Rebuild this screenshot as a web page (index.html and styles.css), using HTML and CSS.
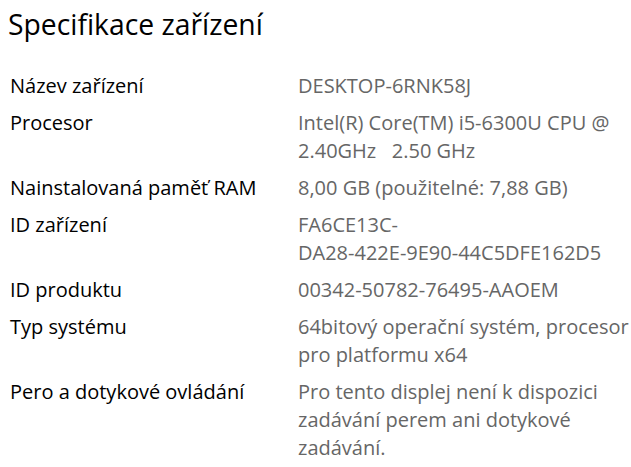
FILE: index.html
```html
<!DOCTYPE html>
<html lang="cs">
<head>
<meta charset="utf-8">
<link rel="stylesheet" href="styles.css">
</head>
<body>
<main class="page">
  <h1 class="title">Specifikace zařízení</h1>
  <dl class="specs">
    <dt>Název zařízení</dt><dd>DESKTOP-6RNK58J</dd>
    <dt>Procesor</dt><dd>Intel(R) Core(TM) i5-6300U CPU @ 2.40GHz&nbsp;&nbsp;&nbsp;2.50 GHz</dd>
    <dt>Nainstalovaná paměť RAM</dt><dd>8,00 GB (použitelné: 7,88 GB)</dd>
    <dt>ID zařízení</dt><dd>FA6CE13C-<span class="nowrap">DA28-422E-9E90-44C5DFE162D5</span></dd>
    <dt>ID produktu</dt><dd>00342-50782-76495-AAOEM</dd>
    <dt>Typ systému</dt><dd>64bitový operační systém, procesor pro platformu x64</dd>
    <dt>Pero a dotykové ovládání</dt><dd>Pro tento displej není k dispozici zadávání perem ani dotykové zadávání.</dd>
  </dl>
</main>
</body>
</html>
```

FILE: styles.css
```css
html, body {
  margin: 0;
  background: #ffffff;
}
.page {
  padding: 4px 0 0 10px;
  font-family: "Open Sans", "Noto Sans", sans-serif;
}
.title {
  margin: 0 0 28px -2px;
  font-size: 28.3px;
  font-weight: 400;
  line-height: 40px;
  color: #000;
}
.specs {
  display: grid;
  grid-template-columns: 288px 333px;
  row-gap: 9px;
  margin: 0;
  font-size: 20px;
  line-height: 28px;
}
.specs dt {
  color: #000;
}
.specs dd {
  margin: 0;
  color: #666666;
}
.nowrap {
  white-space: nowrap;
}
```
